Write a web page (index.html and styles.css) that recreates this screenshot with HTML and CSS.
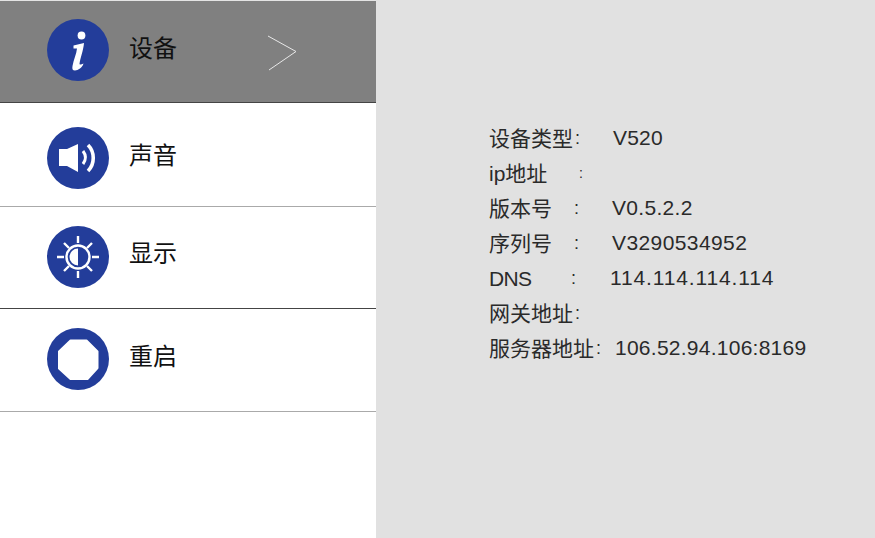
FILE: index.html
```html
<!DOCTYPE html>
<html lang="zh">
<head>
<meta charset="utf-8">
<title>设备</title>
<link rel="stylesheet" href="styles.css">
</head>
<body>
<div class="screen">
  <nav class="menu">
    <div class="item item-active border-dark">
      <svg class="icon" viewBox="0 0 62 62"><circle cx="31" cy="31" r="31" fill="#233d9a"/><circle cx="34.500" cy="16.500" r="3.900" fill="#fff"/><path d="M26.500 26.500 L37 24 C36.500 31 33 40 32.500 45 C33 46 34.500 45.500 36.500 44.500 C35.500 48.500 31 51.500 28 51.500 C25.500 51.500 25 50 25.500 47 C26.500 41 29.500 35 30 29.500 L26.500 29.500 Z" fill="#fff"/></svg>
      <span class="label label-first">设备</span>
      <svg class="chevron" viewBox="0 0 30 36"><path d="M1 1 L29 16.500 L2 35" fill="none" stroke="#e8e8e8" stroke-width="1"/></svg>
    </div>
    <div class="item item-second border-light">
      <svg class="icon icon-second" viewBox="0 0 62 62"><circle cx="31" cy="31" r="31" fill="#233d9a"/><path d="M12 22 H20 L31 17 V45 L20 39 H12 Z" fill="#fff"/><path d="M36 24 C39 28 39 33 36 37" fill="none" stroke="#fff" stroke-width="3"/><path d="M41 18 C48 25 48 37 41 44" fill="none" stroke="#fff" stroke-width="3.600"/></svg>
      <span class="label">声音</span>
    </div>
    <div class="item item-short border-dark">
      <svg class="icon" viewBox="0 0 62 62"><circle cx="31" cy="31" r="31" fill="#233d9a"/><circle cx="31" cy="31" r="11.500" fill="none" stroke="#fff" stroke-width="2.400"/><path d="M31 22.500 A8.500 8.500 0 0 0 31 39.500 Z" fill="#fff"/><path d="M31 10 V17 M31 45 V52 M10 31 H17 M45 31 H52 M17 17 L22 22 M45 17 L40 22 M17 45 L22 40 M45 45 L40 40" stroke="#fff" stroke-width="2.400" fill="none"/></svg>
      <span class="label label-third">显示</span>
    </div>
    <div class="item item-last border-light">
      <svg class="icon" viewBox="0 0 62 62"><circle cx="31" cy="31" r="31" fill="#233d9a"/><path d="M23.500 12.500 H39.500 L50.500 23.500 V40 L40.500 51 H23.500 L18 46 L12 40.500 V23.500 Z" fill="#fff" stroke="#fff" stroke-width="2" stroke-linejoin="round"/></svg>
      <span class="label label-last">重启</span>
    </div>
  </nav>
  <main class="info">
    <div class="row"><span class="key key-a">设备类型</span><span class="colon colon-a">:</span><span class="val val-a">V520</span></div>
    <div class="row"><span class="key key-b">ip地址</span><span class="colon colon-b">:</span></div>
    <div class="row"><span class="key key-c">版本号</span><span class="colon colon-c">:</span><span class="val val-c">V0.5.2.2</span></div>
    <div class="row"><span class="key key-c">序列号</span><span class="colon colon-c">:</span><span class="val val-c2">V3290534952</span></div>
    <div class="row"><span class="key key-d">DNS</span><span class="colon colon-d">:</span><span class="val val-d">114.114.114.114</span></div>
    <div class="row"><span class="key key-a">网关地址</span><span class="colon colon-e">:</span></div>
    <div class="row"><span class="key key-f">服务器地址</span><span class="colon colon-f">:</span><span class="val val-f">106.52.94.106:8169</span></div>
  </main>
</div>
</body>
</html>
```
FILE: styles.css
```css
* { box-sizing: border-box; }
html, body { margin: 0; padding: 0; }
body {
  width: 875px;
  height: 538px;
  overflow: hidden;
  background: #fff;
  font-family: "Liberation Sans", "Noto Sans CJK SC", sans-serif;
}
.screen {
  display: flex;
  width: 875px;
  height: 538px;
}
.menu {
  flex: 0 0 376px;
  display: flex;
  flex-direction: column;
  background: #fff;
}
.item {
  display: flex;
  align-items: center;
  height: 104px;
  padding-left: 47px;
  padding-bottom: 1px;
}
.item-active {
  height: 103px;
  background: #808080;
  border-top: 1px solid #e4e4e4;
  padding-bottom: 3px;
}
.item-second { padding-top: 4px; }
.item-short { height: 102px; }
.item-last { height: 103px; padding-bottom: 3px; }
.border-dark { border-bottom: 1px solid #444; }
.border-light { border-bottom: 1px solid #aaa; }
.icon {
  flex: none;
  width: 62px;
  height: 62px;
}
.icon-second { margin-top: 4px; }
.label {
  margin-left: 20px;
  font-size: 24px;
  line-height: 30px;
  color: #111;
}
.label-first { margin-bottom: 2px; }
.label-third { margin-bottom: 6px; }
.label-last { margin-bottom: 4px; }
.chevron {
  flex: none;
  width: 30px;
  height: 36px;
  margin-left: 90px;
  margin-top: 6px;
}
.info {
  flex: 1;
  background: #e1e1e1;
  padding: 121px 0 0 113px;
  color: #2a2a2a;
  font-size: 21px;
}
.row {
  display: flex;
  height: 35px;
  line-height: 35px;
  white-space: nowrap;
}
.key-a { width: 84px; }
.key-b { width: 88px; }
.key-c { width: 84px; }
.key-d { width: 82px; letter-spacing: -0.7px; }
.key-f { width: 105px; }
.colon { font-size: 18px; }
.colon-b { font-size: 14px; }
.val { margin-top: -1px; }
.val-a { margin-left: 33px; letter-spacing: 0.2px; }
.val-c { margin-left: 33px; letter-spacing: 0.3px; }
.val-c2 { margin-left: 33px; letter-spacing: 0.4px; }
.val-d { margin-left: 34px; letter-spacing: 0.85px; }
.val-f { margin-left: 14px; letter-spacing: 0.25px; }
.colon-a { margin-left: 2px; }
.colon-b { margin-left: 2px; }
.colon-c { margin-left: 1px; }
.colon-e { margin-left: 2px; }
.colon-f { margin-left: 2px; }
```
